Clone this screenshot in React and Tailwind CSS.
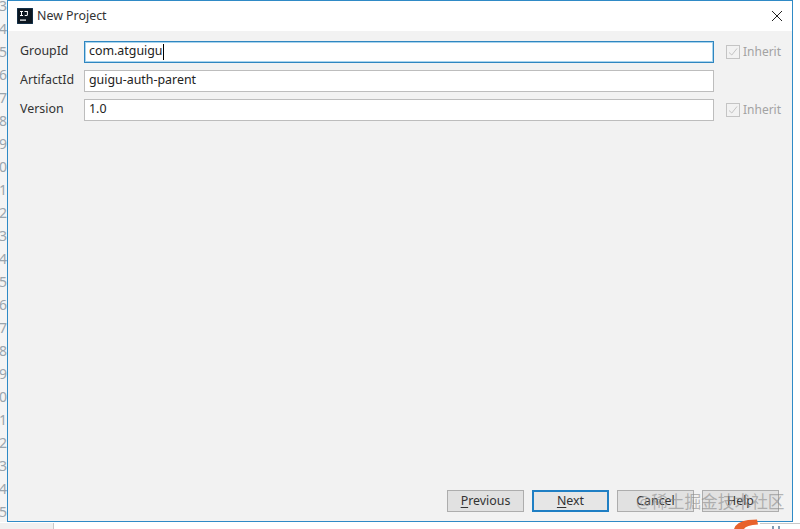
const lines = Array.from({ length: 23 }, (_, i) => 13 + i);

function Field({ label, value, focused, inherit, caret }) {
  return (
    <div className="flex items-center h-[23px] mb-[6px]">
      <div className="w-[76px] shrink-0 pl-[12px] text-[12.4px] text-[#333] whitespace-nowrap">{label}</div>
      <div className={`w-[630px] h-[22px] shrink-0 bg-white flex items-center pl-[4px] text-[12.4px] text-[#222] border ${focused ? "border-[#2f86c0] shadow-[0_0_0_1px_#a8d4ee_inset]" : "border-[#bdbdbd]"}`}>
        <span>{value}</span>
        {caret && <span className="w-px h-[16px] bg-black" />}
      </div>
      {inherit && (
        <div className="flex items-center ml-[12px] text-[12px] text-[#a3a3a3]">
          <svg width="14" height="14" viewBox="0 0 14 14" className="mr-[3px]">
            <rect x="0.5" y="0.5" width="13" height="13" fill="#f2f2f2" stroke="#c4c4c4" />
            <path d="M3 7.5 L5.8 10 L11 3.5" fill="none" stroke="#c4c4c4" strokeWidth="1" />
          </svg>
          <span>Inherit</span>
        </div>
      )}
    </div>
  );
}

function Btn({ u, rest, primary }) {
  return (
    <div className={`h-[22px] w-[77px] flex items-center justify-center text-[12.4px] text-[#333] ${primary ? "border-2 border-[#1f7fc4] bg-[#e6e6e6]" : "border border-[#adadad] bg-[#e1e1e1]"}`}>
      {u ? <span className="underline underline-offset-2">{u}</span> : null}
      <span>{rest}</span>
    </div>
  );
}

export default function App() {
  return (
    <div className="relative w-[800px] h-[529px] bg-white overflow-hidden" style={{ fontFamily: '"Noto Sans", "Open Sans", "Noto Sans CJK SC", sans-serif' }}>
      <div className="flex h-[522px]">
        <div className="w-[7px] bg-[#f4f4f4] overflow-hidden flex flex-col items-end text-[14px] leading-[23px] text-[#9aa5ad]">
          {lines.map((n) => (
            <div key={n} className="h-[23px] shrink-0 first:mt-[-6px]">{n}</div>
          ))}
        </div>
        <div className="w-[786px] h-[522px] border border-[#2f8ac6] flex flex-col bg-[#f2f2f2]">
          <div className="h-[30px] bg-white flex items-center pl-[9px] pr-[8px] shrink-0">
            <svg width="16" height="16" viewBox="0 0 16 16" className="mr-[4px] -mt-px">
              <rect width="16" height="16" fill="#0c1620" />
              <rect x="0" y="0" width="16" height="16" fill="none" stroke="#2a6a9a" strokeWidth="0.6" />
              <path d="M3 3h3v.9H5v3.2h1V8H3v-.9h1V3.9H3zM7.5 3h3.4v3.8q0 1.2-1.7 1.2-1 0-1.7-.5l.4-.8q.6.4 1.2.4.8 0 .8-.4V3.9h-2.4z" fill="#fff" />
              <rect x="3" y="11.5" width="6" height="1.2" fill="#fff" />
            </svg>
            <span className="text-[12.4px] text-[#333]">New Project</span>
            <svg width="12" height="12" viewBox="0 0 12 12" className="ml-auto mr-[1px]">
              <path d="M1 1 L11 11 M11 1 L1 11" stroke="#222" strokeWidth="1" />
            </svg>
          </div>
          <div className="pt-[9px] flex-1 flex flex-col">
            <Field label="GroupId" value="com.atguigu" focused caret inherit />
            <Field label="ArtifactId" value="guigu-auth-parent" />
            <Field label="Version" value="1.0" inherit />
            <div className="mt-auto mb-[9px] flex justify-end gap-[8px] pr-[13px]">
              <Btn u="P" rest="revious" />
              <Btn u="N" rest="ext" primary />
              <Btn rest="Cancel" />
              <Btn rest="Help" />
            </div>
          </div>
        </div>
      </div>
      <div className="flex h-[7px] pt-px">
        <div className="w-[54px] bg-[#f0f0f0] border-r border-[#c8c8c8]" />
        <div className="ml-auto w-[40px] h-px bg-[#c8c8c8]" />
      </div>
      <div className="absolute left-[636px] top-[490px] text-[16.7px] leading-[24px] text-[#8a8a8a]/60 whitespace-nowrap">@稀土掘金技术社区</div>
      <svg className="absolute left-[732px] top-[518px]" width="48" height="11" viewBox="0 0 48 11">
        <path d="M2 11 Q4 4 16 2 L25 1.5 L26 6.5 Q14 7 12 11z" fill="#e8622c" />
        <path d="M41 8v3M47 8v3" stroke="#5a7a99" strokeWidth="1.5" />
      </svg>
    </div>
  );
}
